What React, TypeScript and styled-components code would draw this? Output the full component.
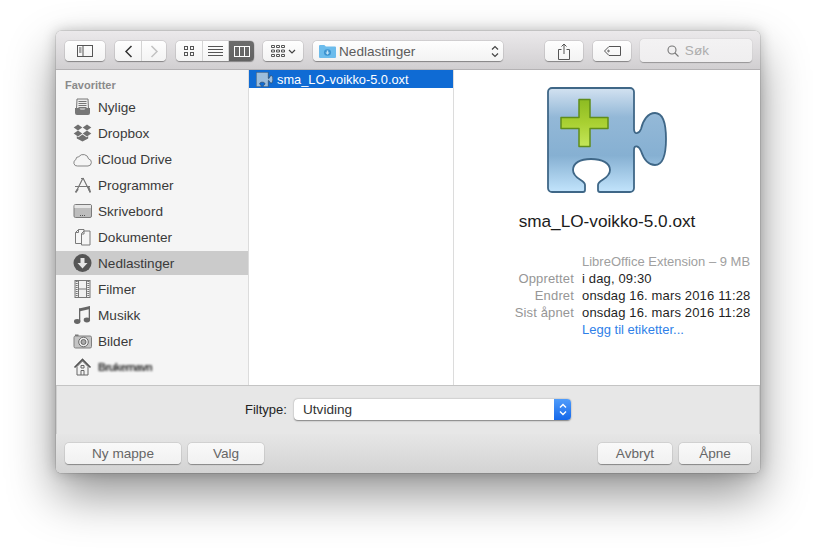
import React from "react";
import styled, { createGlobalStyle } from "styled-components";

const Global = createGlobalStyle`
  html, body { margin: 0; padding: 0; background: #fff; height: 553px; overflow: hidden; }
  * { box-sizing: border-box; }
  body { font-family: "Liberation Sans", Arial, sans-serif; -webkit-font-smoothing: antialiased; }
`;

const Page = styled.div`
  width: 816px; height: 553px; padding: 31px 56px 80px; background: #fff;
`;
const Window = styled.div`
  width: 704px; height: 442px; display: flex; flex-direction: column;
  border-radius: 5px; overflow: hidden; background: #e7e7e7;
  box-shadow: 0 22px 48px rgba(0,0,0,.42), 0 0 14px rgba(0,0,0,.22), 0 0 0 .5px rgba(0,0,0,.18);
`;
const Toolbar = styled.div`
  height: 39px; flex: none; display: flex; align-items: flex-start; padding: 10px 8px 0 9px;
  background: linear-gradient(#ebe9eb, #d1cfd1); border-bottom: 1px solid #b4b2b4;
`;
const Tool = styled.div<{ $w: number; $gap?: number }>`
  width: ${p => p.$w}px; height: 20px; margin-right: ${p => p.$gap ?? 0}px; flex: none;
  display: flex; align-items: center; justify-content: center; gap: 3px;
  background: linear-gradient(#fefefe, #f3f3f3); border-radius: 4px;
  box-shadow: 0 .5px 1px rgba(0,0,0,.35), 0 0 0 .5px rgba(0,0,0,.1);
`;
const Segmented = styled.div<{ $gap: number }>`
  display: flex; flex: none; margin-right: ${p => p.$gap}px; border-radius: 4px; overflow: hidden;
  box-shadow: 0 .5px 1px rgba(0,0,0,.35), 0 0 0 .5px rgba(0,0,0,.1);
`;
const Segment = styled.div<{ $w: number; $on?: boolean }>`
  width: ${p => p.$w}px; height: 20px; display: flex; align-items: center; justify-content: center;
  background: ${p => (p.$on ? "linear-gradient(#6c6c6c, #626262)" : "linear-gradient(#fefefe, #f3f3f3)")};
  & + & { border-left: 1px solid #d4d4d4; }
`;
const PathPopup = styled(Tool)`
  justify-content: flex-start; padding: 0 4px 0 6px; gap: 3px; font-size: 13.6px; color: #5c5c5c;
`;
const Spring = styled.span`flex: 1;`;
const SearchBox = styled.div`
  width: 112px; height: 23px; margin-top: -2px; flex: none; display: flex; align-items: center; justify-content: center; gap: 6px;
  padding-right: 16px; background: linear-gradient(#f3f2f3, #efeeef); border-radius: 4px; color: #adadad; font-size: 13.5px; letter-spacing: .2px;
  box-shadow: 0 .5px 1px rgba(0,0,0,.3);
`;
const Content = styled.div`
  height: 316px; flex: none; display: flex; background: #fff; border-bottom: 1px solid #c4c4c4;
`;
const Sidebar = styled.div`
  width: 193px; flex: none; background: #f5f5f5; border-right: 1px solid #dcdcdc; padding-top: 9px;
`;
const SideTitle = styled.div`
  padding-left: 9px; height: 12px; line-height: 12px; font-size: 11px; font-weight: 700; color: #8a8a8a; margin-bottom: 4px;
`;
const SideRow = styled.div<{ $on?: boolean }>`
  height: 24px; margin-bottom: 2px; display: flex; align-items: center; padding-left: 17px; gap: 6px;
  font-size: 13.6px; color: #3a3a3a; background: ${p => (p.$on ? "#cbcbcb" : "transparent")};
`;
const IconSlot = styled.span`
  width: 19px; height: 20px; display: flex; align-items: center; justify-content: center; flex: none;
`;
const Blurred = styled.span`
  color: #333; filter: blur(1.2px); font-weight: 700; font-size: 11px; letter-spacing: -.7px;
`;
const Column = styled.div`
  width: 205px; flex: none; border-right: 1px solid #dcdcdc;
`;
const FileRow = styled.div`
  height: 18px; display: flex; align-items: center; gap: 4px; padding-left: 7px; background: #0f6bd4;
  color: #fff; font-size: 12.8px;
`;
const Preview = styled.div`
  flex: 1; display: flex; flex-direction: column; align-items: center; padding-top: 17px; position: relative;
`;
const FileName = styled.div`
  margin-top: 18px; height: 20px; line-height: 20px; font-size: 17.2px; color: #1c1c1c; text-align: center;
`;
const InfoGrid = styled.div`
  align-self: flex-start; margin-top: 22px; display: grid; grid-template-columns: 120px auto; column-gap: 8px;
  font-size: 13px; line-height: 17px; color: #1f1f1f; white-space: nowrap; letter-spacing: .15px;
`;
const Label = styled.span`text-align: right; color: #969696;`;
const Kind = styled.span`grid-column: 2; color: #a0a0a0; letter-spacing: 0;`;
const TagLink = styled.span`grid-column: 2; color: #2f7fe8; letter-spacing: 0;`;
const FilterRow = styled.div`
  height: 48px; flex: none; display: flex; align-items: flex-start; padding: 13px 0 0 189px; gap: 7px;
  background: #e7e7e7; font-size: 13px; color: #222;
  box-shadow: inset 1px 0 #cfcfcf, inset -1px 0 #cfcfcf;
`;
const FilterLabel = styled.span`line-height: 21px; width: 42px; white-space: nowrap;`;
const Select = styled.div`
  width: 277px; height: 21px; display: flex; border-radius: 4px; overflow: hidden; background: #fff;
  box-shadow: 0 .5px 1.5px rgba(0,0,0,.45);
`;
const SelectText = styled.span`flex: 1; padding-left: 9px; line-height: 21px; font-size: 13.6px; color: #333;`;
const SelectArrows = styled.span`
  width: 17px; display: flex; align-items: center; justify-content: center; background: linear-gradient(#4f9cfb, #1568ea);
`;
const Footer = styled.div`
  flex: 1; display: flex; align-items: flex-start; padding: 9px 9px 0; gap: 7px;
  background: linear-gradient(#e6e6e6, #d3d3d3);
`;
const PushButton = styled.div<{ $w: number }>`
  width: ${p => p.$w}px; height: 21px; line-height: 21px; text-align: center; font-size: 13.6px; color: #666;
  background: linear-gradient(#f9f9f9, #f1f1f1); border-radius: 4px;
  box-shadow: 0 .5px 1px rgba(0,0,0,.35), 0 0 0 .5px rgba(0,0,0,.08);
`;

const BODY = "M5 1H83a4 4 0 0 1 4 4V42C87 48 92 47 94 42C96 33 101 26 108 26C115 26 119 33 119 52C119 70 115 78 108 78C100 78 96 70 94 64C92 59 87 57 87 63V101a4 4 0 0 1-4 4H53a2 2 0 0 1-2-2V98C51 93 63 92 63 83C63 76 55 72 44 72C33 72 26 76 26 83C26 92 38 93 38 98V103a2 2 0 0 1-2 2H5a4 4 0 0 1-4-4V5a4 4 0 0 1 4-4Z";

const Puzzle = () => (
  <svg width="120" height="106" viewBox="0 0 120 106">
    <defs>
      <linearGradient id="pz" x1="0" y1="0" x2="0" y2="1">
        <stop offset="0" stopColor="#d3e2f1" />
        <stop offset=".28" stopColor="#93b8d7" />
        <stop offset=".65" stopColor="#86b0d2" />
        <stop offset="1" stopColor="#c2e4fc" />
      </linearGradient>
      <linearGradient id="pl" x1="0" y1="0" x2="0" y2="1">
        <stop offset="0" stopColor="#8dbb22" />
        <stop offset=".5" stopColor="#a9d032" />
        <stop offset="1" stopColor="#c4e65a" />
      </linearGradient>
    </defs>
    <path d={BODY} fill="url(#pz)" stroke="#3f6787" strokeWidth="1.8" />
    <path d="M32 12.500h11v18h18v11h-18v18h-11v-18h-18v-11h18Z" fill="url(#pl)" stroke="#5f8d1a" strokeWidth="1.500" strokeLinejoin="round" />
  </svg>
);

const SmallPuzzle = () => (
  <svg width="17" height="15" viewBox="0 0 120 106">
    <path d={BODY} fill="#9dbddb" stroke="#2e4a66" strokeWidth="5" />
  </svg>
);

const g = "#777";
const icon = (c: React.ReactNode) => (
  <svg width="19" height="20" viewBox="0 0 19 20">{c}</svg>
);
const Icons: Record<string, React.ReactNode> = {
  recent: icon(<>
    <path d="M4 2h11l.5 10h-12Z" fill="#eee" stroke={g} />
    <path d="M5.500 4.500h8M5.500 6.500h8M5.500 8.500h8M5.500 10.500h8" stroke={g} />
    <path d="M2 11h4.500l1 2h4l1-2H17v5a2 2 0 0 1-2 2H4a2 2 0 0 1-2-2Z" fill={g} />
  </>),
  dropbox: icon(<g fill="#6f6f6f">
    <path d="M5 1.500l4.300 2.900-4.300 3-4.300-3Z" /><path d="M14 1.500l4.300 2.900-4.300 3-4.300-3Z" />
    <path d="M5 7.500l4.300 3-4.300 2.900-4.300-2.900Z" /><path d="M14 7.500l4.300 3-4.300 2.900-4.300-2.900Z" />
    <path d="M9.500 11.500l4 2.700 1.700-1v2.200l-5.700 3.200-5.700-3.200v-2.200l1.700 1Z" />
  </g>),
  cloud: icon(<path d="M4.500 17h10.500a3.600 3.600 0 0 0 .6-7.100 5.500 5.500 0 0 0-9.800-2.200 3 3 0 0 0-3 3A3.300 3.300 0 0 0 4.500 17Z" fill="none" stroke="#858585" />),
  apps: icon(<g fill="none" stroke="#777" strokeWidth="1.200">
    <path d="M10 3L3 17M10 3l7 14M2 11.500h15" />
    <path d="M8 3.500l3 0" /><path d="M5 14l-2.500 3.500M15.500 12l1.800 5.500" strokeWidth="1.800" />
  </g>),
  desktop: icon(<>
    <rect x="1" y="3.500" width="17.500" height="13" rx="1.500" fill="#bdbdbd" stroke="#7b7b7b" />
    <rect x="1.500" y="4" width="16.500" height="3" fill="#e6e6e6" />
    <path d="M7 14.500h1M9 14.500h1M11 14.500h1" stroke="#555" />
  </>),
  docs: icon(<g fill="#f6f6f6" stroke="#7a7a7a">
    <path d="M2.500 5.500l3-3H11v14H2.500Z" /><path d="M8.500 6.500l2.500-2.500h6v14h-8.500Z" />
    <path d="M5.500 2.500v3h-3M11 4v3H8.500" fill="none" />
  </g>),
  down: icon(<>
    <circle cx="9.500" cy="10" r="9" fill="#555" />
    <path d="M7.500 5h4v5h3l-5 5.500-5-5.500h3Z" fill="#e6e6e6" />
  </>),
  film: icon(<>
    <rect x="2" y="1.500" width="15" height="17" fill="#f0f0f0" stroke="#777" />
    <path d="M5.500 2v16M13.500 2v16M5.500 10h8" stroke="#777" />
    <path d="M3.700 2v16M15.300 2v16" stroke="#777" strokeWidth="2" strokeDasharray="1 1" />
  </>),
  music: icon(<g fill="#666">
    <path d="M6 3.500l11-2.500v3l-11 2.500Z" />
    <path d="M6 3.500h1.300V16.500H6ZM15.700 1.500H17V15h-1.300Z" />
    <ellipse cx="4.200" cy="16.500" rx="3.200" ry="2.400" /><ellipse cx="13.900" cy="15" rx="3.200" ry="2.400" />
  </g>),
  photo: icon(<>
    <rect x="1" y="5" width="17.500" height="12" rx="1.500" fill="#c4c4c4" stroke="#808080" />
    <rect x="2" y="3.500" width="3.500" height="1.500" fill="#777" />
    <circle cx="10.500" cy="11" r="4.800" fill="#eee" stroke="#6a6a6a" />
    <circle cx="10.500" cy="11" r="2.500" fill="#aaa" stroke="#6a6a6a" />
  </>),
  home: icon(<>
    <path d="M4 9.500V18h11V9.500L9.500 4Z" fill="#f2f2f2" stroke="#666" />
    <path d="M1.500 10.500L9.500 2.500l8 8" fill="none" stroke="#555" strokeWidth="1.700" />
    <path d="M8 18v-4.500h3V18M8 8.500h3v2.500H8Z" fill="none" stroke="#666" />
  </>),
};

const items = [
  ["recent", "Nylige"], ["dropbox", "Dropbox"], ["cloud", "iCloud Drive"], ["apps", "Programmer"],
  ["desktop", "Skrivebord"], ["docs", "Dokumenter"], ["down", "Nedlastinger"], ["film", "Filmer"],
  ["music", "Musikk"], ["photo", "Bilder"],
];

const d = "#555";
export default function App() {
  return (
    <Page>
      <Global />
      <Window>
        <Toolbar>
          <Tool $w={40} $gap={10}>
            <svg width="16" height="12" viewBox="0 0 16 12" fill="none" stroke={d}>
              <rect x=".5" y=".5" width="15" height="11" /><path d="M6 .5v11M2 3h2.500M2 5h2.500M2 7h2.500" />
            </svg>
          </Tool>
          <Segmented $gap={10}>
            <Segment $w={26}>
              <svg width="9" height="13" viewBox="0 0 9 13" fill="none" stroke="#333" strokeWidth="1.500"><path d="M7.500 1L2 6.500l5.500 5.500" /></svg>
            </Segment>
            <Segment $w={25}>
              <svg width="9" height="13" viewBox="0 0 9 13" fill="none" stroke="#c2c2c2" strokeWidth="1.500"><path d="M1.500 1L7 6.500 1.500 12" /></svg>
            </Segment>
          </Segmented>
          <Segmented $gap={9}>
            <Segment $w={26}>
              <svg width="10" height="10" viewBox="0 0 10 10" fill="none" stroke={d}>
                <rect x=".5" y=".5" width="3" height="3" /><rect x="6.500" y=".5" width="3" height="3" />
                <rect x=".5" y="6.500" width="3" height="3" /><rect x="6.500" y="6.500" width="3" height="3" />
              </svg>
            </Segment>
            <Segment $w={26}>
              <svg width="15" height="11" viewBox="0 0 15 11" stroke={d}>
                <path d="M0 .5h15M0 3.500h15M0 6.500h15M0 9.500h15" />
              </svg>
            </Segment>
            <Segment $w={26} $on>
              <svg width="16" height="11" viewBox="0 0 16 11" fill="none" stroke="#fff">
                <rect x=".5" y=".5" width="15" height="10" /><path d="M5.500 .5v10M10.500 .5v10" />
              </svg>
            </Segment>
          </Segmented>
          <Tool $w={40} $gap={10}>
            <svg width="14" height="12" viewBox="0 0 14 12" fill="none" stroke={d}>
              <path d="M.5 .5h3v2h-3ZM5.500 .5h3v2h-3ZM10.500 .5h3v2h-3ZM.5 5h3v2h-3ZM5.500 5h3v2h-3ZM10.500 5h3v2h-3ZM.5 9.500h3v2h-3ZM5.500 9.500h3v2h-3ZM10.500 9.500h3v2h-3Z" />
            </svg>
            <svg width="8" height="5" viewBox="0 0 8 5" fill="none" stroke="#444" strokeWidth="1.200"><path d="M1 1l3 3 3-3" /></svg>
          </Tool>
          <PathPopup $w={190} $gap={42}>
            <svg width="17" height="14" viewBox="0 0 16 14" preserveAspectRatio="none">
              <path d="M0 2a1 1 0 0 1 1-1h4l1.500 1.500H15a1 1 0 0 1 1 1V13a1 1 0 0 1-1 1H1a1 1 0 0 1-1-1Z" fill="#6cbcec" />
              <circle cx="8" cy="8.500" r="3.300" fill="#3d93cf" />
              <path d="M7.300 6.500h1.400v2h1.300L8 10.800 6 8.500h1.300Z" fill="#bfe3f8" />
            </svg>
            <span>Nedlastinger</span>
            <Spring />
            <svg width="8" height="13" viewBox="0 0 8 13" fill="none" stroke="#444" strokeWidth="1.200"><path d="M1 4.500l3-3 3 3M1 8.500l3 3 3-3" /></svg>
          </PathPopup>
          <Tool $w={38} $gap={10}>
            <svg width="12" height="17" viewBox="0 0 12 17" fill="none" stroke={d}>
              <path d="M3.500 6.500H.5v10h11v-10h-3M6 11V1M3.500 3.500L6 1l2.500 2.500" />
            </svg>
          </Tool>
          <Tool $w={38} $gap={9}>
            <svg width="17" height="10" viewBox="0 0 17 10" fill="none" stroke={d}>
              <path d="M5 .5h11.500v9H5L.5 5Z" /><circle cx="4.500" cy="5" r=".8" />
            </svg>
          </Tool>
          <SearchBox>
            <svg width="12" height="12" viewBox="0 0 12 12" fill="none" stroke="#777" strokeWidth="1.100">
              <circle cx="5" cy="5" r="4" /><path d="M8 8l3.500 3.500" />
            </svg>
            <span>Søk</span>
          </SearchBox>
        </Toolbar>
        <Content>
          <Sidebar>
            <SideTitle>Favoritter</SideTitle>
            {items.map(([k, t]) => (
              <SideRow key={k} $on={k === "down"}>
                <IconSlot>{Icons[k]}</IconSlot>
                <span>{t}</span>
              </SideRow>
            ))}
            <SideRow>
              <IconSlot>{Icons.home}</IconSlot>
              <Blurred>Brukernavn</Blurred>
            </SideRow>
          </Sidebar>
          <Column>
            <FileRow><SmallPuzzle /><span>sma_LO-voikko-5.0.oxt</span></FileRow>
          </Column>
          <Preview>
            <Puzzle />
            <FileName>sma_LO-voikko-5.0.oxt</FileName>
            <InfoGrid>
              <Kind>LibreOffice Extension – 9 MB</Kind>
              <Label>Opprettet</Label><span>i dag, 09:30</span>
              <Label>Endret</Label><span>onsdag 16. mars 2016 11:28</span>
              <Label>Sist åpnet</Label><span>onsdag 16. mars 2016 11:28</span>
              <TagLink>Legg til etiketter...</TagLink>
            </InfoGrid>
          </Preview>
        </Content>
        <FilterRow>
          <FilterLabel>Filtype:</FilterLabel>
          <Select>
            <SelectText>Utviding</SelectText>
            <SelectArrows>
              <svg width="8" height="13" viewBox="0 0 8 13" fill="none" stroke="#fff" strokeWidth="1.400"><path d="M1 4.500l3-3 3 3M1 8.500l3 3 3-3" /></svg>
            </SelectArrows>
          </Select>
        </FilterRow>
        <Footer>
          <PushButton $w={116}>Ny mappe</PushButton>
          <PushButton $w={76}>Valg</PushButton>
          <Spring />
          <PushButton $w={74}>Avbryt</PushButton>
          <PushButton $w={72}>Åpne</PushButton>
        </Footer>
      </Window>
    </Page>
  );
}
